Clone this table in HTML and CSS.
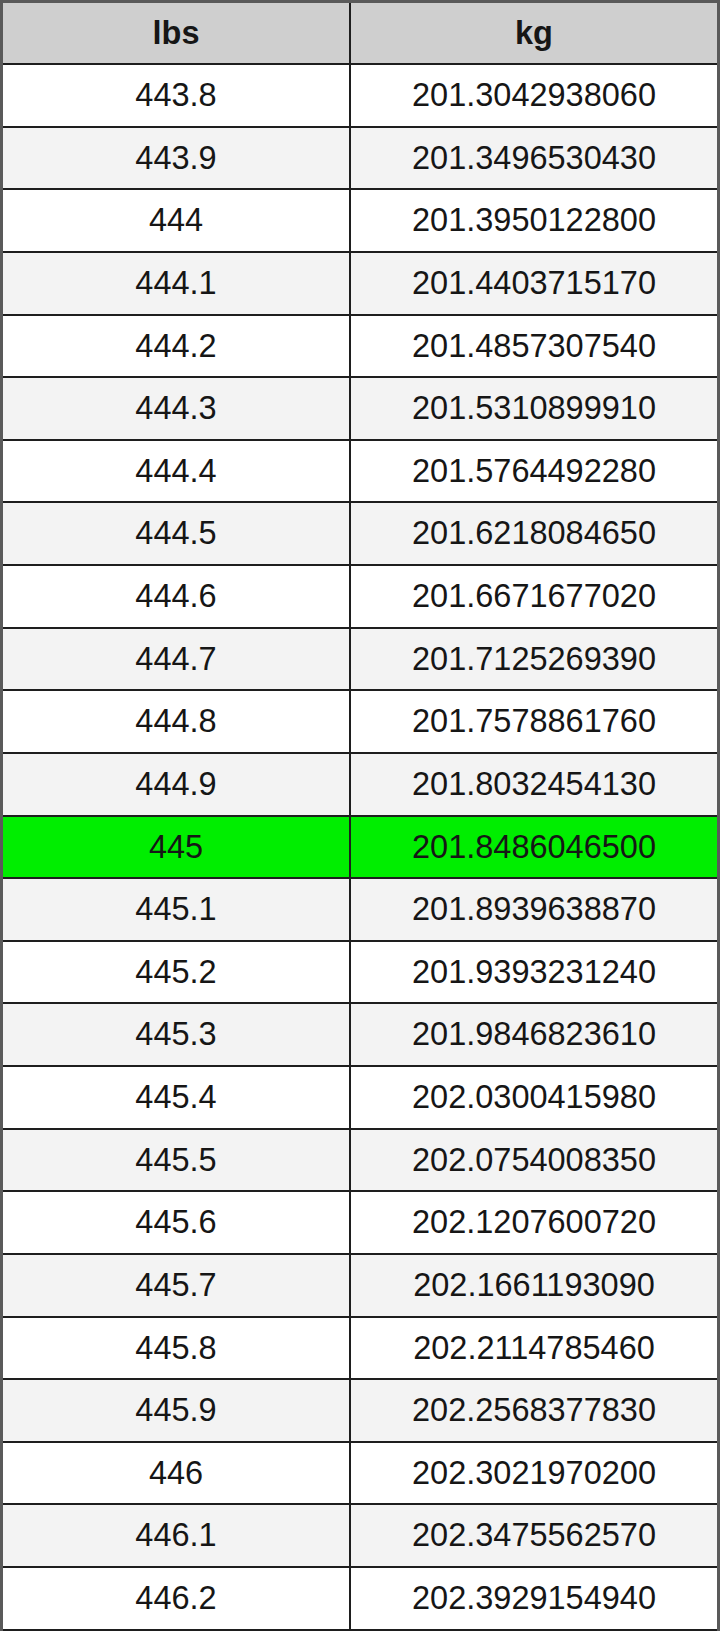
FILE: index.html
```html
<!DOCTYPE html>
<html>
<head>
<meta charset="utf-8">
<link rel="stylesheet" href="styles.css">
</head>
<body>
<div class="table">
  <div class="row head"><div class="cell">lbs</div><div class="cell">kg</div></div>
  <div class="row"><div class="cell">443.8</div><div class="cell">201.3042938060</div></div>
  <div class="row alt"><div class="cell">443.9</div><div class="cell">201.3496530430</div></div>
  <div class="row"><div class="cell">444</div><div class="cell">201.3950122800</div></div>
  <div class="row alt"><div class="cell">444.1</div><div class="cell">201.4403715170</div></div>
  <div class="row"><div class="cell">444.2</div><div class="cell">201.4857307540</div></div>
  <div class="row alt"><div class="cell">444.3</div><div class="cell">201.5310899910</div></div>
  <div class="row"><div class="cell">444.4</div><div class="cell">201.5764492280</div></div>
  <div class="row alt"><div class="cell">444.5</div><div class="cell">201.6218084650</div></div>
  <div class="row"><div class="cell">444.6</div><div class="cell">201.6671677020</div></div>
  <div class="row alt"><div class="cell">444.7</div><div class="cell">201.7125269390</div></div>
  <div class="row"><div class="cell">444.8</div><div class="cell">201.7578861760</div></div>
  <div class="row alt"><div class="cell">444.9</div><div class="cell">201.8032454130</div></div>
  <div class="row hl"><div class="cell">445</div><div class="cell">201.8486046500</div></div>
  <div class="row alt"><div class="cell">445.1</div><div class="cell">201.8939638870</div></div>
  <div class="row"><div class="cell">445.2</div><div class="cell">201.9393231240</div></div>
  <div class="row alt"><div class="cell">445.3</div><div class="cell">201.9846823610</div></div>
  <div class="row"><div class="cell">445.4</div><div class="cell">202.0300415980</div></div>
  <div class="row alt"><div class="cell">445.5</div><div class="cell">202.0754008350</div></div>
  <div class="row"><div class="cell">445.6</div><div class="cell">202.1207600720</div></div>
  <div class="row alt"><div class="cell">445.7</div><div class="cell">202.1661193090</div></div>
  <div class="row"><div class="cell">445.8</div><div class="cell">202.2114785460</div></div>
  <div class="row alt"><div class="cell">445.9</div><div class="cell">202.2568377830</div></div>
  <div class="row"><div class="cell">446</div><div class="cell">202.3021970200</div></div>
  <div class="row alt"><div class="cell">446.1</div><div class="cell">202.3475562570</div></div>
  <div class="row"><div class="cell">446.2</div><div class="cell">202.3929154940</div></div>
</div>
</body>
</html>
```
FILE: styles.css
```css
html, body {
  margin: 0;
  padding: 0;
  background: #ffffff;
}
body {
  font-family: "Liberation Sans", Arial, sans-serif;
  color: #161616;
}
.table {
  width: 720px;
  box-sizing: border-box;
  border-top: 3px solid #5a5a5a;
  border-left: 3px solid #5a5a5a;
  border-right: 3px solid #5a5a5a;
}
.row {
  display: grid;
  grid-template-columns: 348px 1fr;
  height: 62.64px;
  box-sizing: border-box;
  border-bottom: 2.5px solid #1e1e1e;
  background: #ffffff;
}
.row.head {
  height: 62px;
  background: #cfcfcf;
  font-weight: bold;
}
.row.alt {
  background: #f3f3f3;
}
.row.hl {
  background: #00ee00;
}
.cell {
  display: flex;
  align-items: center;
  justify-content: center;
  font-size: 32.5px;
  line-height: 1;
}
.cell:first-child {
  border-right: 2.5px solid #1e1e1e;
  box-sizing: border-box;
}
```
